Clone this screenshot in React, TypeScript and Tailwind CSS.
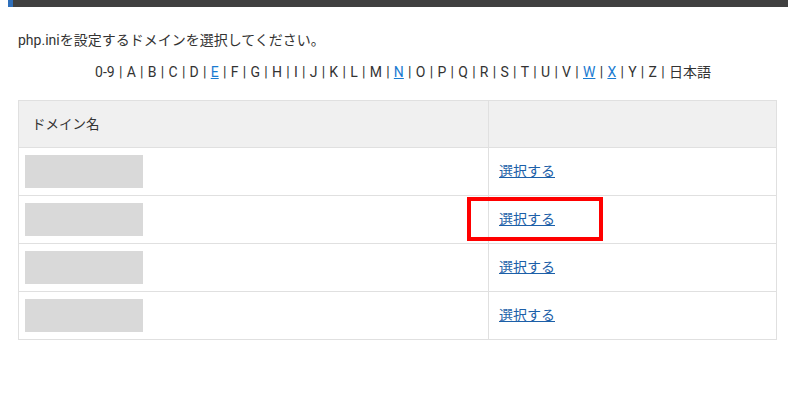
import React from "react";

const letters: { t: string; link?: boolean }[] = [
  { t: "0-9" }, { t: "A" }, { t: "B" }, { t: "C" }, { t: "D" }, { t: "E", link: true },
  { t: "F" }, { t: "G" }, { t: "H" }, { t: "I" }, { t: "J" }, { t: "K" }, { t: "L" },
  { t: "M" }, { t: "N", link: true }, { t: "O" }, { t: "P" }, { t: "Q" }, { t: "R" },
  { t: "S" }, { t: "T" }, { t: "U" }, { t: "V" }, { t: "W", link: true }, { t: "X", link: true },
  { t: "Y" }, { t: "Z" }, { t: "日本語" },
];

export default function App() {
  return (
    <div
      className="w-[788px] h-[404px] bg-white text-[#333] relative overflow-hidden"
      style={{ fontFamily: "Roboto, 'Noto Sans CJK JP', sans-serif" }}
    >
      <div className="ml-[8px] h-[7px] flex">
        <div className="w-[5px] bg-[#2f6fba]" />
        <div className="flex-1 bg-[#404040]" />
      </div>
      <div className="pl-[18px] pr-[12px]">
        <p className="mt-[25px] text-[14px] leading-[17px]">php.iniを設定するドメインを選択してください。</p>
        <div className="mt-[15px] pl-[12px] text-[14px] leading-[17px] text-center">
          {letters.map((l, i) => (
            <React.Fragment key={i}>
              {i > 0 && <span className="px-[0.8px]"> | </span>}
              {l.link ? (
                <a className="text-[#1a7bd1] underline">{l.t}</a>
              ) : (
                <span>{l.t}</span>
              )}
            </React.Fragment>
          ))}
        </div>
        <table className="mt-[19px] w-[759px] border-collapse text-[14px]">
          <tbody>
            <tr className="h-[47px] bg-[#f0f0f0]">
              <td className="w-[470px] border border-[#e0e0e0] pl-[13px] align-middle text-[13.5px]">ドメイン名</td>
              <td className="border border-[#e0e0e0]" />
            </tr>
            {[0, 1, 2, 3].map((i) => (
              <tr key={i} className="h-[48px]">
                <td className="border border-[#e0e0e0] pl-[6px] align-middle">
                  <div className="w-[118px] h-[33px] bg-[#d9d9d9]" />
                </td>
                <td className="border border-[#e0e0e0] pl-[10px] align-middle">
                  <a className="text-[#1c5fa8] underline">選択する</a>
                </td>
              </tr>
            ))}
          </tbody>
        </table>
      </div>
      <div className="absolute left-[467px] top-[197px] w-[136px] h-[44px] border-[4px] border-[#ff0000]" />
    </div>
  );
}
